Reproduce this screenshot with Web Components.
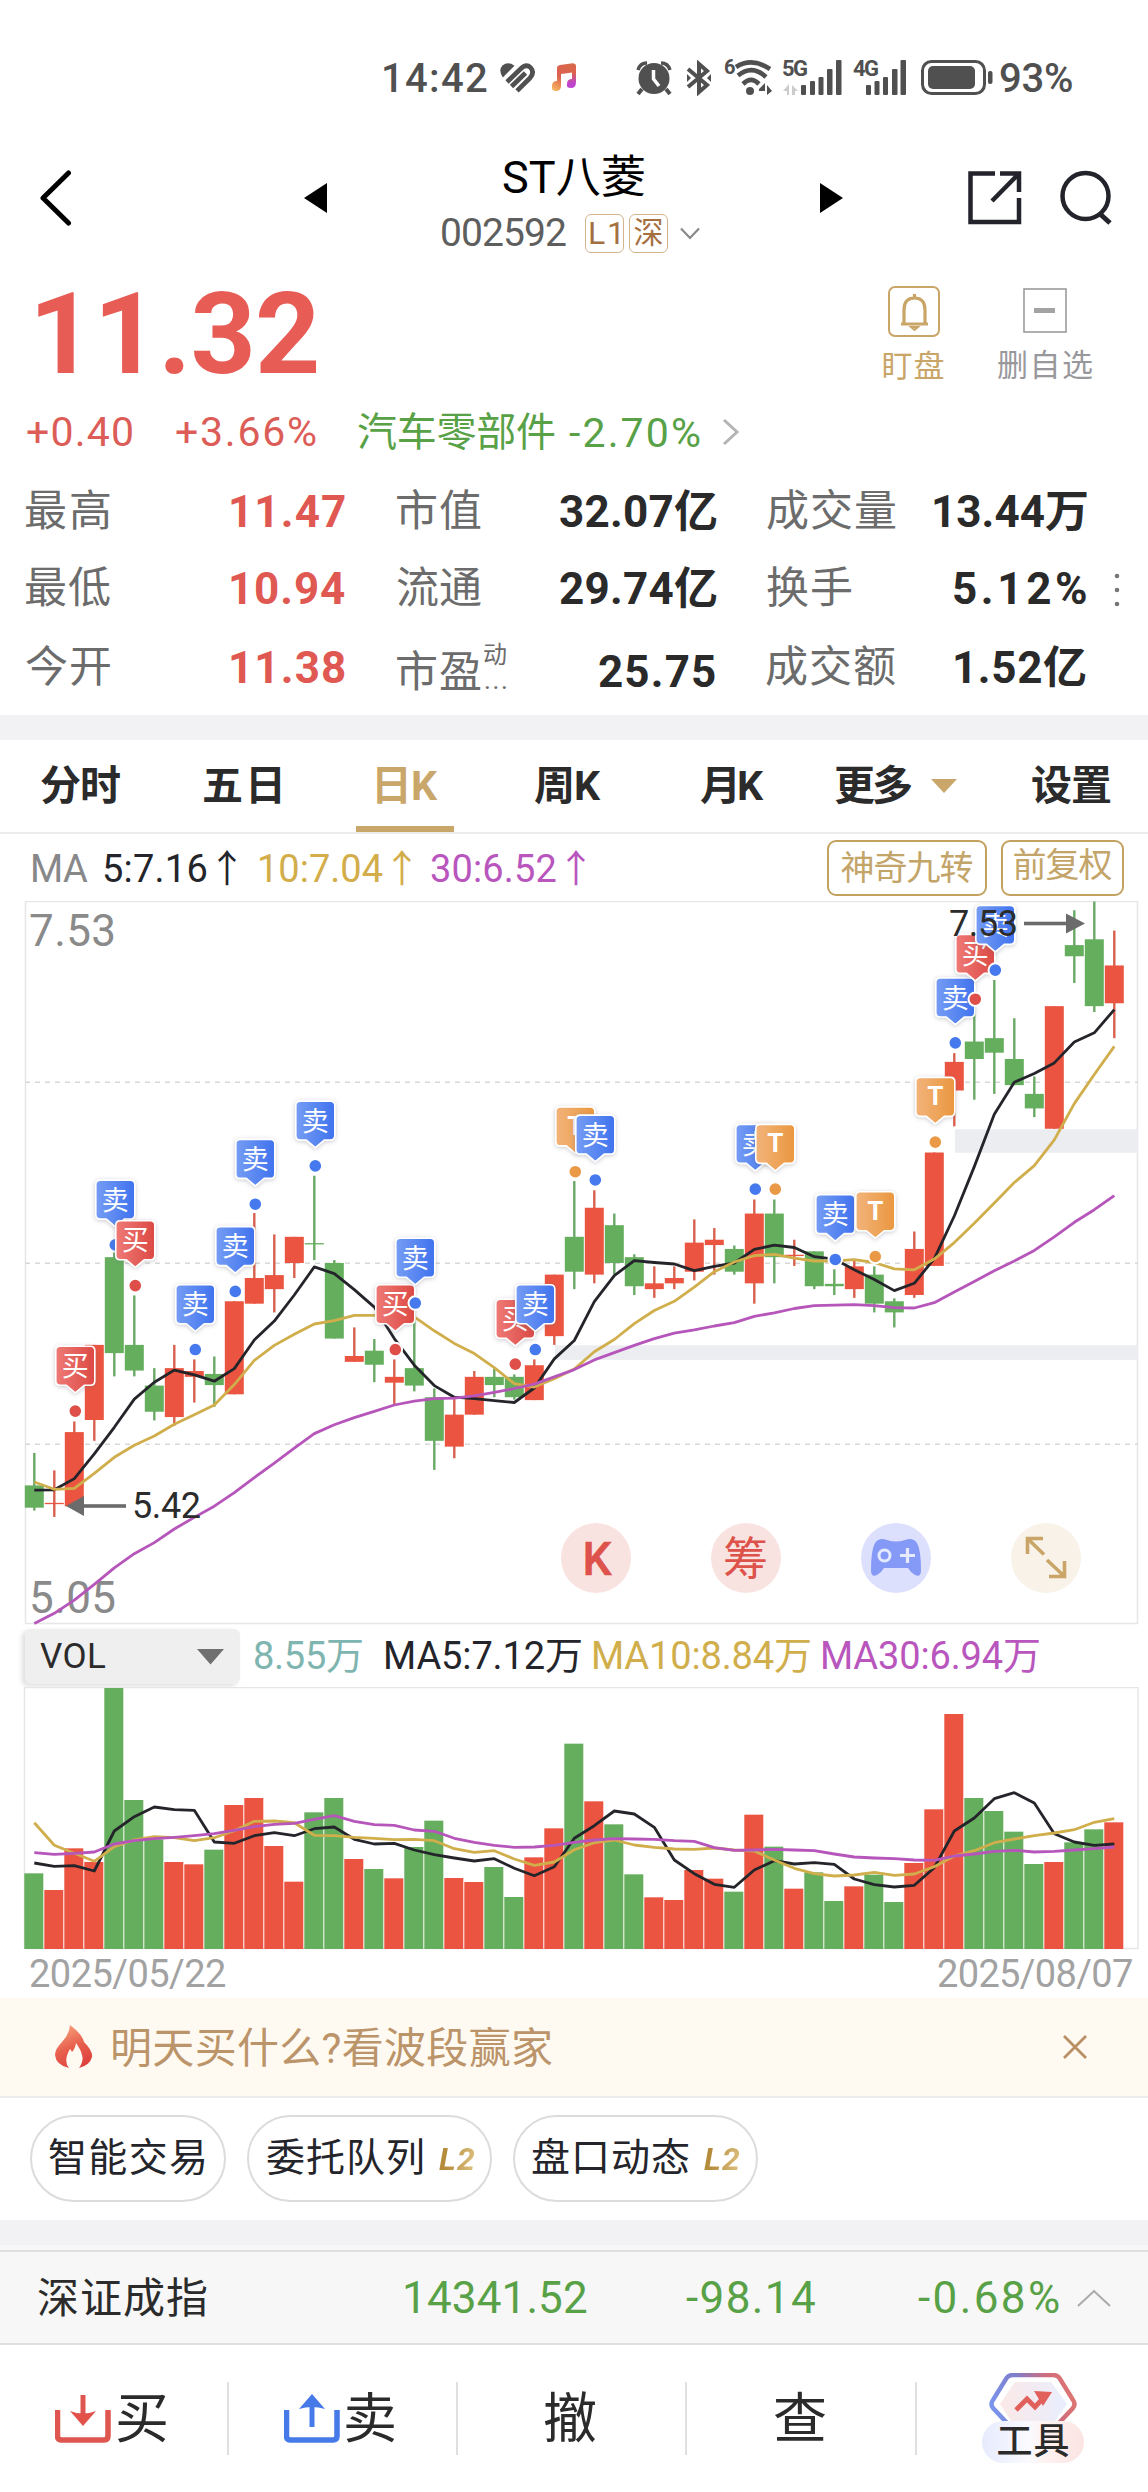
<!DOCTYPE html>
<html lang="zh-CN">
<head>
<meta charset="utf-8">
<title>ST八菱 002592</title>
<style>
html,body{margin:0;background:#fff}
body{width:1148px;font-family:Roboto,"Noto Sans CJK SC",sans-serif}
</style>
</head>
<body>
<stock-page></stock-page>
<script>
const FONT = 'Roboto,"Noto Sans CJK SC",sans-serif';

function define(name, css, html, after) {
  const tpl = document.createElement('template');
  tpl.innerHTML = `<style>:host{display:block;box-sizing:border-box}svg{display:block;flex:none}.row{display:flex;align-items:center}${css}</style>${html}`;
  customElements.define(name, class extends HTMLElement {
    connectedCallback() {
      if (this.shadowRoot) return;
      this.attachShadow({mode: 'open'}).append(tpl.content.cloneNode(true));
      if (after) after(this, this.shadowRoot);
    }
  });
}

/* Text whose ink spans exactly w pixels: s = size, b = weight, m = left margin */
const pen = document.createElement('canvas').getContext('2d');
class InkText extends HTMLElement {
  connectedCallback() {
    if (this.shadowRoot) return;
    const g = (n, d) => this.getAttribute(n) || d;
    const s = g('s', 40), b = g('b', 400), w = +g('w', 0), str = this.textContent;
    const st = g('i') ? 'italic ' : '';
    pen.font = `${st}${b} ${s}px ${FONT}`;
    const m = pen.measureText(str), ink = m.actualBoundingBoxLeft + m.actualBoundingBoxRight;
    const n = [...str].length, ls = n > 1 ? (w - ink) / (n - 1) : 0;
    this.attachShadow({mode: 'open'}).innerHTML = `<style>
      :host{display:block;flex:none;width:${w}px;margin-left:${g('m', 0)}px;font:${st}${b} ${s}px/1 ${FONT};color:${g('c', 'inherit')};white-space:nowrap;line-height:${s}px}
      span{display:block;margin-left:${m.actualBoundingBoxLeft}px;letter-spacing:${ls}px;width:max-content}</style><span><slot></slot></span>`;
  }
}
customElements.define('ink-text', InkText);

define('status-bar', `:host{height:155px;color:#505050}.row{height:155px}`, `
<div class="row">
 <ink-text w="103" s="40" b="500" m="384" style="margin-top:2px">14:42</ink-text>
 <svg width="36" height="30" style="margin-left:13px" viewBox="0 0 36 30" fill="none" stroke="#505050" stroke-width="4.700" stroke-linejoin="round">
  <path d="M2.800 14.500Q-2 7 2.500 2.500 8-2 14.500 2.800z" fill="#505050" stroke="none"/>
  <path d="M7 19L20.500 6Q26 .5 30.500 4.500 35 9.500 30 15L17 27.800"/><path d="M11.500 23.500L25.500 10"/></svg>
 <svg width="27" height="29" style="margin-left:15px" viewBox="0 0 27 29"><defs><linearGradient id="m" x1=".2" y1="1" x2=".75" y2="0"><stop offset="0" stop-color="#f4b25e"/><stop offset=".45" stop-color="#dd6150"/><stop offset="1" stop-color="#d8694b"/></linearGradient><linearGradient id="n" x1="0" y1="0" x2="0" y2="1"><stop offset=".3" stop-color="#dc654e"/><stop offset=".8" stop-color="#bd45cf"/></linearGradient></defs>
  <path fill="url(#m)" d="M6 5Q6 2.500 9 2L20 .4Q25 0 25 3V9L10 11V23Q10 28 5 28T1 23q0-5 5-5z"/><path fill="url(#n)" d="M21 3h4V19Q25 25 20 25t-4-4q0-5 5-5z"/></svg>
 <svg width="36" height="35" style="margin-left:58px" viewBox="0 0 36 35"><g stroke="#505050" fill="none" stroke-width="4"><path d="M2 10Q4 3 11 3M34 10Q32 3 25 3" stroke-width="3.500"/><path d="M6 29L2 34M30 29l4 5"/></g><circle cx="18" cy="18.500" r="15.500" fill="#505050"/><path d="M17.500 10v9l5.500 7" stroke="#fff" stroke-width="3.500" fill="none"/></svg>
 <svg width="28" height="36" style="margin-left:13px" viewBox="0 0 28 36" fill="none" stroke="#505050" stroke-width="4"><path d="M3 9L22 25 14 32V4L22 11 3 27"/><path d="M2 14v8l4-4zM26 14v8l-4-4z" fill="#505050" stroke="none"/></svg>
 <div style="margin-left:11px;align-self:flex-start;padding-top:57px"><ink-text w="9" s="20" b="700">6</ink-text></div>
 <svg width="38" height="37" style="margin-left:1px" viewBox="0 0 38 37" fill="none" stroke="#505050" stroke-width="4.600"><path d="M2 8Q18-2 36 10M4 16.500Q18 5 32 18M9 25q8-8 16 0"/><circle cx="16" cy="32" r="4" fill="#505050" stroke="none"/><path d="M25 32h6v-8l-6 6zM33 36v-10l5 6z" fill="#505050" stroke="none"/></svg>
 <div style="margin-left:11px;align-self:flex-start;padding-top:58px"><ink-text w="24" s="22" b="700">5G</ink-text>
  <svg width="15" height="12" style="margin-top:4px" viewBox="0 0 15 12" fill="#ccc"><path d="M0 7l6-7v11H4V7zM9 1l6 6h-3v4H9z"/></svg></div>
 <svg width="41" height="36" style="margin-left:-6px;margin-top:0" fill="#505050"><rect y="25" width="5" height="10" rx="1"/><rect x="9" y="21" width="5" height="14" rx="1"/><rect x="17.500" y="17" width="5" height="18" rx="1"/><rect x="26" y="9" width="5.500" height="26" rx="1"/><rect x="35" y="0" width="5.500" height="35" rx="1"/></svg>
 <div style="margin-left:11px;align-self:flex-start;padding-top:58px"><ink-text w="25" s="22" b="700">4G</ink-text></div>
 <svg width="41" height="36" style="margin-left:-13px;margin-top:0" fill="#505050"><rect x="1" y="25" width="5" height="10" rx="1"/><rect x="9.500" y="21" width="5" height="14" rx="1"/><rect x="18" y="17" width="5" height="18" rx="1"/><rect x="27" y="9" width="5.500" height="26" rx="1"/><rect x="35.500" y="0" width="5.500" height="35" rx="1"/></svg>
 <svg width="72" height="36" style="margin-left:15px" fill="none"><rect x="1.500" y="1.500" width="62" height="32" rx="9" stroke="#505050" stroke-width="3"/><rect x="7" y="6" width="47" height="23" rx="5" fill="#505050"/><rect x="67" y="11" width="4.500" height="13" rx="2" fill="#505050"/></svg>
 <ink-text w="72" s="40" b="500" m="7" style="margin-top:2px">93%</ink-text>
</div>`);

define('quote-header', `:host{height:120px;display:flex;align-items:flex-start;color:#000}
.mid{width:258px;margin-left:115px}.badge{height:37px;width:37px;border:1.500px solid #d3b48c;border-radius:6px;display:flex;align-items:center;justify-content:center;margin-right:5px;color:#a4703f}`, `
<svg width="33" height="56" style="margin:15px 0 0 39px" fill="none" stroke="#000" stroke-width="5" stroke-linejoin="round" stroke-linecap="round"><path d="M29.500 3L4 28l25.500 25"/></svg>
<svg width="23" height="30" style="margin:28px 0 0 232px"><path d="M0 15L23 0v30z"/></svg>
<div class="mid"><ink-text w="141" s="45" m="61" style="margin-top:0">ST八菱</ink-text>
 <div class="row" style="margin-top:12px;height:42px"><ink-text w="124" s="39" c="#5e5e5e">002592</ink-text>
 <div class="badge" style="margin-left:19px"><ink-text w="29" s="32">L1</ink-text></div><div class="badge"><ink-text w="28" s="30">深</ink-text></div>
 <svg width="20" height="13" style="margin-left:7px" fill="none" stroke="#888" stroke-width="2.200"><path d="M1 1.500l9 9.500 9-9.500"/></svg></div></div>
<svg width="23" height="30" style="margin:28px 0 0 120px"><path d="M23 15L0 0v30z"/></svg>
<svg width="56" height="56" style="margin:15px 0 0 124px" fill="none" stroke="#23232b" stroke-width="4.500"><path d="M28 3.500H3.500v48.500h48.500V28"/><path d="M33 3.500H52V22M52 3.500L25 31"/></svg>
<svg width="56" height="56" style="margin:15px 0 0 36px" fill="none" stroke="#23232b" stroke-width="4.500"><circle cx="26.500" cy="26" r="23"/><path d="M40 43l11 10" stroke-width="5"/></svg>`);

define('price-panel', `.top{display:flex;height:115px}.col{display:flex;flex-direction:column;align-items:center}.r{height:84px}`, `
<div class="top"><ink-text w="279" s="114" b="700" m="38" c="#e85c56" style="margin-top:2px">11.32</ink-text>
 <div class="col" style="margin-left:566px;padding-top:11px;width:61px"><svg width="52" height="51" fill="none" stroke="#c9a567"><rect x="1" y="1" width="50" height="49" rx="6" stroke-width="2"/><path d="M13 38h27M16 38V24Q16 12 26.500 12T37 24v14M26.500 8v4" stroke-width="3.200"/><path d="M23 41h7l-3.500 3z" stroke-width="2"/></svg><ink-text w="60" s="31" c="#c9a567" style="margin-top:14px">盯盘</ink-text></div>
 <div class="col" style="margin-left:54px;padding-top:13px;width:94px"><svg width="44" height="45" fill="none"><rect x="1" y="1" width="42" height="43" stroke="#9b9b9b" stroke-width="1.600"/><path d="M11 22.500h21" stroke="#a3a3a3" stroke-width="5"/></svg><ink-text w="94" s="31" c="#98989c" style="margin-top:17px">删自选</ink-text></div></div>
<div class="row r"><ink-text w="105" s="41" m="27" c="#dc5d57">+0.40</ink-text><ink-text w="140" s="41" m="44" c="#dc5d57">+3.66%</ink-text>
<ink-text w="197" s="40" m="42" c="#58a147" style="margin-top:2px">汽车零部件</ink-text><ink-text w="131" s="41" m="14" c="#58a147" style="margin-top:2px">-2.70%</ink-text>
<svg width="18" height="28" style="margin-left:22px" fill="none" stroke="#b5b5b5" stroke-width="3"><path d="M2 2l13 12L2 26"/></svg></div>`);

define('stat-grid', `:host{height:241px;color:#2a2a2a}.row{height:79px}.row:first-of-type{height:75px}.l{color:#6c6c6c}.red{color:#e05852}.d{margin-top:9px}`, `
<div class="row"><ink-text class="l" w="84" s="43" m="26">最高</ink-text><ink-text class="red" w="114" s="44" b="700" m="121">11.47</ink-text><ink-text class="l" w="84" s="43" m="52">市值</ink-text><ink-text w="157" s="44" b="700" m="79">32.07亿</ink-text><ink-text class="l" w="129" s="43" m="50">成交量</ink-text><ink-text w="153" s="44" b="700" m="38">13.44万</ink-text></div>
<div class="row"><ink-text class="l" w="84" s="43" m="26">最低</ink-text><ink-text class="red" w="114" s="44" b="700" m="121">10.94</ink-text><ink-text class="l" w="84" s="43" m="52">流通</ink-text><ink-text w="157" s="44" b="700" m="79">29.74亿</ink-text><ink-text class="l" w="84" s="43" m="50">换手</ink-text><ink-text w="132" s="44" b="700" m="103">5.12%</ink-text>
<svg width="6" height="36" style="margin-left:28px" fill="#777"><circle cx="3" cy="5" r="2.300"/><circle cx="3" cy="19" r="2.300"/><circle cx="3" cy="33" r="2.300"/></svg></div>
<div class="row"><ink-text class="l" w="84" s="43" m="26">今开</ink-text><ink-text class="red" w="114" s="44" b="700" m="121">11.38</ink-text><ink-text class="l d" w="84" s="43" m="52">市盈</ink-text>
<div style="margin-left:3px;width:24px;height:54px"><ink-text class="l" w="23" s="24" style="margin-top:2px">动</ink-text><ink-text class="l" w="21" s="26" m="1">...</ink-text></div>
<ink-text class="d" w="116" s="44" b="700" m="91">25.75</ink-text><ink-text class="l" w="129" s="43" m="51">成交额</ink-text><ink-text w="131" s="44" b="700" m="60">1.52亿</ink-text></div>`);

define('period-tabs', `:host{border-top:25px solid #f2f2f5;border-bottom:2px solid #ececec;height:119px;color:#2b2b2b}.row{height:92px}.on{height:92px;width:98px;box-sizing:border-box;border-bottom:6px solid #c9a76b;display:flex;align-items:center;padding-top:6px;margin-left:76px;color:#c9a76b}`, `
<div class="row"><ink-text w="79" s="41" b="700" m="41">分时</ink-text><ink-text w="76" s="41" b="700" m="84">五日</ink-text><div class="on"><ink-text w="61" s="41" b="700" m="21">日K</ink-text></div><ink-text w="67" s="41" b="700" m="80">周K</ink-text><ink-text w="64" s="41" b="700" m="99">月K</ink-text><ink-text w="77" s="41" b="700" m="71">更多</ink-text><svg width="26" height="14" style="margin-left:19px"><path d="M0 0h26L13 14z" fill="#c9a76b"/></svg><ink-text w="79" s="41" b="700" m="75">设置</ink-text></div>`);

define('ma-legend', `:host{height:67px;display:flex;align-items:center}.b{height:56px;box-sizing:border-box;border:2px solid #c3a260;border-radius:9px;display:flex;align-items:center;justify-content:center;color:#c3a469}`, `
<ink-text w="55" s="38" m="33" c="#88888a" style="margin-top:2px">MA</ink-text><ink-text w="132" s="38" m="16" c="#24242b" style="margin-top:2px">5:7.16↑</ink-text><ink-text w="151" s="38" m="24" c="#d2ad4a" style="margin-top:2px">10:7.04↑</ink-text><ink-text w="154" s="38" m="20" c="#b956bd" style="margin-top:2px">30:6.52↑</ink-text>
<div class="b" style="margin-left:242px;width:160px"><ink-text w="131" s="34">神奇九转</ink-text></div><div class="b" style="margin-left:14px;width:123px"><ink-text w="98" s="34" style="margin-top:-5px">前复权</ink-text></div>`);

/* ---------- charts: one slot per trading day, 20px apart ---------- */
const GREEN = '#64ae5d', RED = '#eb5440';
const X = i => 34.3 + 20 * i;
const line = (ys, map, color) => `<polyline fill="none" stroke="${color}" stroke-width="2.800" stroke-linejoin="round" points="${ys.map((v, i) => X(i) + ',' + map(v).toFixed(1)).join(' ')}"/>`;

/* price levels: 23 is 7.53 at the top edge, 1513 is 5.05 at the bottom */
const P = v => .5 + (v - 23) * 722 / 1490;
/* [direction, high, body top, body bottom, low] */
const candles = [['g',1161,1228,1274,1280],['r',1197,1264,1264,1293],['r',1096,1118,1271,1271],['r',938,938,1093,1136],['g',740,757,955,1003],['g',836,938,991,1003],['g',986,1022,1076,1094],['r',938,986,1087,1105],['r',968,992,1004,1057],['g',962,998,1021,1066],['r',848,848,1040,1040],['r',666,800,853,853],['r',710,794,823,871],['r',715,715,769,800],['g',589,728,728,763],['g',763,769,925,925],['r',902,961,973,973],['g',926,950,979,1015],['r',968,1004,1016,1063],['g',853,986,1022,1034],['g',1028,1046,1136,1196],['r',1050,1082,1148,1172],['r',992,1004,1082,1082],['g',987,1004,1021,1046],['g',999,1004,1046,1051],['r',968,980,1052,1052],['r',793,793,920,938],['g',600,715,787,823],['r',619,655,793,811],['g',667,691,769,793],['g',751,757,817,835],['r',776,811,823,841],['r',776,800,811,823],['r',679,727,787,805],['r',697,721,732,793],['g',733,740,787,793],['r',638,667,811,853],['g',638,667,757,811],['r',721,752,752,775],['g',745,745,817,823],['g',782,812,817,835],['r',764,776,823,841],['g',776,793,853,871],['g',842,848,871,902],['r',704,740,835,841],['r',541,541,775,775],['r',336,354,413,487],['g',240,312,348,432],['g',185,305,335,420],['g',264,348,402,402],['g',384,420,450,468],['r',239,239,492,492],['g',41,113,136,191],['g',23,101,239,251],['r',83,155,233,305]];
const ma5 = [1238,1237,1214,1163,1108,1050,1015,990,1000,1013,987,928,889,835,777,791,824,860,925,980,1022,1046,1049,1053,1057,1027,967,929,849,795,764,768,771,785,776,769,741,732,737,756,761,783,803,826,811,760,672,570,462,396,378,356,313,294,246];
const ma10 = [1221,1236,1234,1203,1170,1145,1126,1102,1082,1062,1020,970,939,916,895,888,877,877,877,880,909,935,956,985,1018,1025,1008,988,952,927,894,867,848,819,787,767,754,751,759,765,765,762,768,781,783,761,727,687,645,603,568,515,440,380,322];
const ma30 = [1513,1492,1465,1432,1398,1369,1346,1318,1294,1271,1243,1212,1182,1151,1121,1103,1088,1075,1062,1054,1049,1048,1043,1036,1028,1019,1004,989,969,954,939,925,914,907,899,892,879,872,863,857,856,855,857,861,862,851,829,807,785,765,743,715,685,659,630];
/* trade markers: [day, kind, level of the bubble's top] */
const marks = [[2,'b',943],[4,'s',600],[5,'b',684],[8,'s',816],[10,'s',696],[11,'s',516],[14,'s',437],[18,'b',816],[19,'s',720],[24,'b',846],[25,'s',816],[27,'t',449],[28,'s',466],[36,'s',485],[37,'t',485],[40,'s',630],[42,'t',624],[45,'t',388],[46,'s',183],[47,'b',93],[48,'s',33]];
const kinds = {b: ['买', '#df4f4a'], s: ['卖', '#4679ee'], t: ['T', '#ea9a47']};

define('k-chart', `:host{height:726px}text{font-family:${FONT}}`, `<svg width="1148" height="726"></svg>`, (el, root) => {
  let s = `<defs><filter id="sh" x="-30%" y="-30%" width="160%" height="160%"><feDropShadow dx="0" dy="1" stdDeviation="2" flood-color="#667" flood-opacity=".35"/></filter>
  <linearGradient id="gb"><stop offset="0" stop-color="#ee7a76"/><stop offset="1" stop-color="#dc4944"/></linearGradient><linearGradient id="gs"><stop offset="0" stop-color="#769df4"/><stop offset="1" stop-color="#3f72ee"/></linearGradient><linearGradient id="gt"><stop offset="0" stop-color="#f2b47b"/><stop offset="1" stop-color="#ea973f"/></linearGradient></defs>
  <rect x="25.500" y=".5" width="1112" height="722" fill="none" stroke="#e6e6e6" stroke-width="1.500"/>
  <path d="M25 ${P(396)}H1138M25 ${P(769.5)}H1138M25 ${P(1143)}H1138" stroke="#d8d8d8" stroke-width="1.600" stroke-dasharray="5 5" fill="none"/>
  <rect x="555" y="${P(939)}" width="583" height="14.500" fill="#ecedf1"/><rect x="955" y="${P(493)}" width="183" height="23.500" fill="#ecedf1"/>
  <text x="29" y="45" font-size="44" fill="#8a8a8a" textLength="87">7.53</text><text x="29" y="712" font-size="44" fill="#8a8a8a" textLength="87">5.05</text>`;
  candles.forEach(([d, h, t, b, l], i) => {
    const c = d == 'g' ? GREEN : RED;
    s += `<path d="M${X(i)} ${P(h)}V${P(l)}" stroke="${d == 'g' ? '#6aa866' : '#d9604f'}" stroke-width="2.400"/><rect x="${X(i) - 9.5}" y="${P(t)}" width="19" height="${Math.max(P(b) - P(t), 1.3)}" fill="${c}"/>`;
  });
  s += line(ma5, P, '#24242b') + line(ma10, P, '#d0ae4c') + line(ma30, P, '#b655ba');
  marks.forEach(([i, k, v]) => {
    const x = X(i) + 1, y = P(v) - 1, [ch, dot] = kinds[k];
    s += `<circle cx="${x}" cy="${y + 64.8}" r="6.800" fill="${dot}" stroke="#fff" stroke-width="2"/>
    <path filter="url(#sh)" d="M${x - 15} ${y}h30q4.500 0 4.500 4.500v30q0 4.500-4.500 4.500h-6l-9 7.500-9-7.500h-6q-4.500 0-4.500-4.500v-30q0-4.500 4.500-4.500z" fill="url(#g${k})" stroke="#fff" stroke-width="1.600"/>
    <text x="${x}" y="${y + (k == 't' ? 28 : 29.5)}" text-anchor="middle" font-size="${k == 't' ? 26 : 27}" font-weight="${k == 't' ? 700 : 400}" fill="#fff">${ch}</text>`;
  });
  s += `<g fill="#6b6b6b"><path d="M66 605l18-10v20z"/><rect x="82" y="603.200" width="44" height="3.600"/><path d="M1085 22.500l-19-10v20z"/><rect x="1024" y="20.700" width="44" height="3.600"/></g>
  <text x="132" y="617" font-size="36" fill="#2b2b2b" textLength="69">5.42</text><text x="949" y="35" font-size="36" fill="#2b2b2b" textLength="69">7.53</text>
  <g transform="translate(0 657)"><circle cx="596" r="35" fill="#f9e3e0"/><text x="597" y="16.500" font-size="46" font-weight="500" stroke="#dd524b" stroke-width=".6" fill="#dd524b" text-anchor="middle">K</text>
  <circle cx="746" r="35" fill="#f9e3e0"/><text x="745.500" y="17" font-size="45" fill="#dd524b" text-anchor="middle">筹</text>
  <circle cx="896" r="35" fill="#dce0fd"/><path d="M871 12Q871-8 875-15q4-6 12-3 9 3 18 0 8-3 12 3 4 7 4 27 0 8-6 5-4-2-7-7H884q-3 5-7 7-6 3-6-5z" fill="#8599f6"/><circle cx="884.500" cy="-2.500" r="5.500" fill="none" stroke="#e6eaff" stroke-width="3"/><path d="M900-2.500h15M907.500-10v15" stroke="#e6eaff" stroke-width="3.200"/>
  <circle cx="1046" r="35" fill="#f8f2e8"/><path d="M1043-19.500H1027.500V-4M1028-19L1044-3.500M1049 18.500h15.500V3M1064 18L1047 2" fill="none" stroke="#c9a568" stroke-width="3.600"/></g>`;
  root.querySelector('svg').innerHTML = s;
});

define('vol-legend', `:host{height:60px;display:flex;align-items:center;overflow:hidden}.sel{margin:-1px 0 0 25px;width:215px;height:55px;background:#efefef;border-radius:6px;box-shadow:-3px 2px 5px #0002;display:flex;align-items:center}ink-text{margin-top:-3px}.sel ink-text{margin-top:0}`, `
<div class="sel"><ink-text w="65" s="35" m="15" c="#2b2b2b">VOL</ink-text><svg width="27" height="16" style="margin-left:92px"><path d="M0 0h27L13.500 15.500z" fill="#707070"/></svg></div>
<ink-text w="107" s="38" m="15" c="#7fb5b0">8.55万</ink-text><ink-text w="195" s="38" m="24" c="#24242b">MA5:7.12万</ink-text><ink-text w="216" s="38" m="13" c="#d0ae4c">MA10:8.84万</ink-text><ink-text w="216" s="38" m="13" c="#b956bd">MA30:6.94万</ink-text>`);

const V = v => (v - 201) / 3;
const vols = [760,810,685,726,204,540,658,726,733,689,555,534,678,785,577,534,717,747,775,681,602,774,786,741,831,712,625,371,544,613,763,832,840,750,776,815,584,680,806,757,843,799,764,846,729,568,282,534,573,635,732,726,667,628,607];
const v5 = [729,739,737,753,633,590,561,569,571,666,670,647,638,647,626,621,658,672,670,690,704,714,723,716,745,767,740,655,617,573,582,622,720,761,793,802,750,722,732,728,733,777,794,801,796,743,633,594,536,518,549,641,666,676,672];
const v10 = [608,676,700,724,680,660,650,653,662,653,632,604,603,608,646,647,652,655,659,658,662,686,697,692,717,736,726,689,668,660,675,682,687,688,684,690,693,720,745,761,768,765,757,766,762,740,708,692,668,657,647,639,629,607,596];
const v30 = [698,703,700,696,672,662,656,652,647,641,631,620,613,610,598,587,604,614,616,630,634,655,667,676,682,681,676,667,660,656,657,658,662,664,683,691,690,688,690,692,702,711,714,716,720,721,708,702,694,691,696,694,690,686,681];
define('vol-chart', ``, `<svg width="1148" height="263"></svg><div class="row" style="height:48px"><ink-text w="195" s="38" m="30" c="#a2a2a2">2025/05/22</ink-text><ink-text w="194" s="38" m="713" c="#a2a2a2">2025/08/07</ink-text></div>`, (el, root) => {
  let s = `<rect x="24.500" y=".500" width="1113.500" height="261" fill="none" stroke="#e6e6e6" stroke-width="1.500"/>`;
  vols.forEach((v, i) => s += `<rect x="${X(i) - 10}" y="${V(v)}" width="19" height="${262 - V(v)}" fill="${candles[i][0] == 'g' ? GREEN : RED}"/>`);
  root.querySelector('svg').innerHTML = s + line(v5, V, '#24242b') + line(v10, V, '#d0ae4c') + line(v30, V, '#b655ba');
});

define('promo-banner', `:host{height:100px;background:#fefaf2;border-bottom:2px solid #ececec;display:flex;align-items:center}`, `
<svg width="38" height="44" style="margin-left:55px" viewBox="0 0 38 44"><defs><linearGradient id="f" x1=".3" y1="0" x2=".7" y2="1"><stop offset="0" stop-color="#f5a07a"/><stop offset=".5" stop-color="#e8604e"/><stop offset="1" stop-color="#dd3e3c"/></linearGradient></defs><path fill="url(#f)" d="M15 0Q27 9 29 17 38 26 37 32 35 40 24 43q5-7 3-13-1-5-6-12-1 6-4 9-1-2-2-3-7 12-1 19Q1 40 0 30 0 24 7 17 14 10 15 0z"/></svg>
<ink-text w="439" s="42" m="20" c="#bb946a" style="margin-top:3px">明天买什么?看波段赢家</ink-text><svg width="24" height="24" style="margin-left:511px" stroke="#b98f63" stroke-width="2.800"><path d="M1 1l22 22M23 1L1 23"/></svg>`);

define('chip-item', `:host{height:87px;border:2px solid #dcdcdc;border-radius:44px;display:flex;align-items:center;color:#24242b;flex:none}`, `<slot></slot>`);
define('chip-row', `:host{height:122px;display:flex;align-items:center}chip-item{margin-top:-1px}ink-text[i]{background:linear-gradient(100deg,#b48c3c 25%,#e0c383);-webkit-background-clip:text;color:transparent!important}`, `
<chip-item style="margin-left:30px;width:196px"><ink-text w="156" s="39" m="17">智能交易</ink-text></chip-item>
<chip-item style="margin-left:21px;width:245px"><ink-text w="156" s="39" m="18">委托队列</ink-text><ink-text i="1" w="36" s="32" b="700" m="16">L2</ink-text></chip-item>
<chip-item style="margin-left:21px;width:245px"><ink-text w="157" s="39" m="17">盘口动态</ink-text><ink-text i="1" w="36" s="32" b="700" m="15">L2</ink-text></chip-item>`);

define('index-bar', `:host{border-top:25px solid #f2f2f5}.in{border-top:2px solid #dfdfdf;border-bottom:2px solid #dfdfdf;background:#f7f7f7;height:91px;color:#58a147}.g{height:5px;background:#f7f7f8}`, `
<div class="g"></div><div class="row in"><ink-text w="169" s="42" m="38" c="#2b2b2b" style="margin-top:2px">深证成指</ink-text><ink-text w="182" s="44" m="198">14341.52</ink-text><ink-text w="129" s="44" m="99">-98.14</ink-text><ink-text w="141" s="44" m="103">-0.68%</ink-text>
<svg width="34" height="18" style="margin-left:18px" fill="none" stroke="#aaa" stroke-width="2"><path d="M1 17L17 2l16 15"/></svg></div>`);

define('trade-nav', `:host{height:147px;display:flex;align-items:center;color:#2b2b2b}i{width:2px;height:73px;background:#e0e0e0;flex:none}ink-text{margin-top:3px}
.tool{margin-left:63px;width:106px;height:92px;display:grid;justify-items:center;align-items:start}.tool>*{grid-area:1/1}.tool ink-text{margin-top:0}
.pill{margin-top:48px;width:102px;height:42px;border-radius:21px;background:linear-gradient(90deg,#e6ebfd,#fafaff 45%,#fdf3f2 60%,#fbe4e1);display:flex;align-items:center;justify-content:center}`, `
<svg width="56" height="48" style="margin-left:55px" fill="none" stroke="#df5650"><path d="M2.500 15V41q0 4 4 4H49q4 0 4-4V15" stroke-width="5.500"/><path d="M28 0v23" stroke-width="5"/><path d="M15 16q13 5 26 0L28 31z" fill="#e2514a" stroke="none"/></svg><ink-text w="52" s="54" m="6">买</ink-text>
<i style="margin-left:58px"></i>
<svg width="56" height="50" style="margin-left:55px" fill="none" stroke="#477ae9"><path d="M2.500 16V42q0 4 4 4H49q4 0 4-4V16" stroke-width="5.500"/><path d="M28 33V8" stroke-width="5"/><path d="M15 15q13-4 26 0L28 0z" fill="#477ae9" stroke="none"/></svg><ink-text w="52" s="54" m="6">卖</ink-text>
<i style="margin-left:58px"></i><ink-text w="54" s="54" m="86">撤</ink-text><i style="margin-left:87px"></i><ink-text w="52" s="54" m="87">查</ink-text><i style="margin-left:89px"></i>
<div class="tool"><svg width="88" height="50" viewBox="0 0 88 50" fill="none"><defs><linearGradient id="h" x1="0" x2="1" y1=".6" y2=".4"><stop offset="0" stop-color="#7b94ec"/><stop offset=".4" stop-color="#7f7dc8"/><stop offset=".75" stop-color="#cf6d7c"/><stop offset="1" stop-color="#df7672"/></linearGradient><linearGradient id="k"><stop offset="0" stop-color="#fbe9e7"/><stop offset="1" stop-color="#e9eefe"/></linearGradient></defs>
 <path d="M26 9h36l16 22-12 17H22L11 31z" fill="url(#k)"/><path d="M18 50L4 35q-3-4 0-8L17 6q2-4 7-4H64q5 0 7 4L84 27q3 4 0 8L70 50" stroke="url(#h)" stroke-width="4.500"/><path d="M27 37l11-11 8 8 12-13" stroke="#e2605c" stroke-width="4.800"/><path d="M45 18l18 1-9 14z" fill="#e2605c"/></svg>
<div class="pill"><ink-text w="71" s="36" b="500">工具</ink-text></div></div>`);

define('stock-page', `:host{width:1148px;height:2492px;background:#fff;overflow:hidden}`, `
<status-bar></status-bar><quote-header></quote-header><price-panel></price-panel><stat-grid></stat-grid><period-tabs></period-tabs><ma-legend></ma-legend><k-chart></k-chart><vol-legend></vol-legend><vol-chart></vol-chart><promo-banner></promo-banner><chip-row></chip-row><index-bar></index-bar><trade-nav></trade-nav>`);
</script>
</body>
</html>
